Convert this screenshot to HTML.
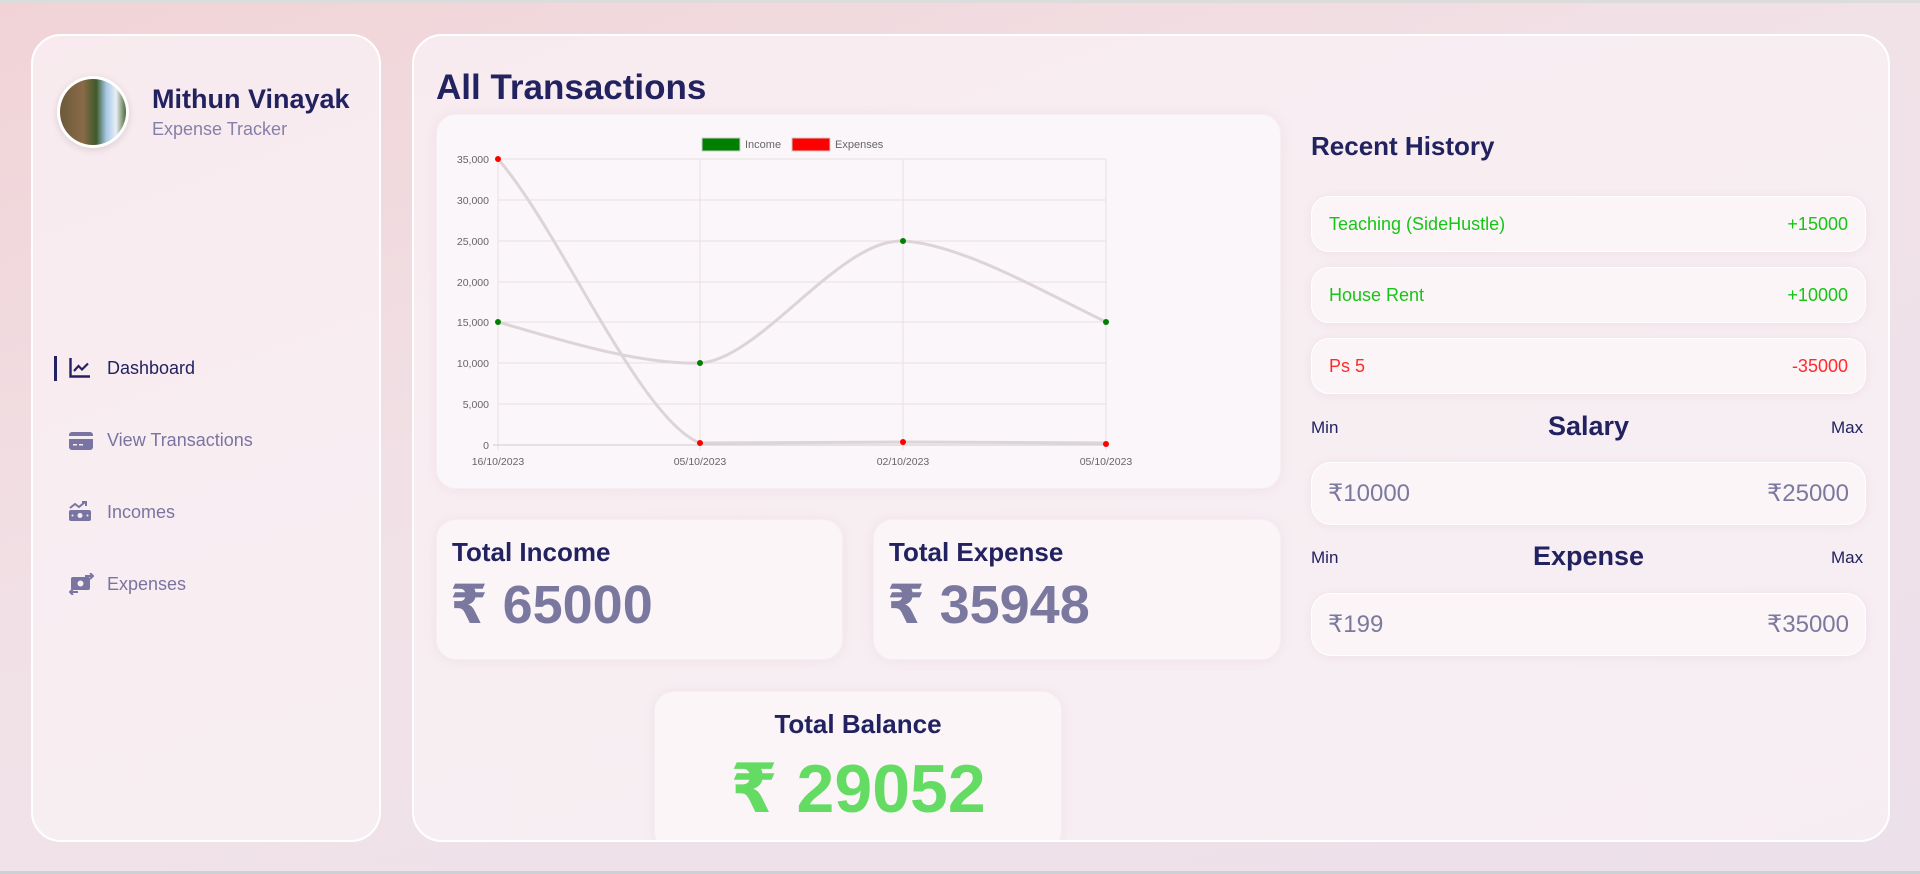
<!DOCTYPE html>
<html><head><meta charset="utf-8"><style>
*{margin:0;padding:0;box-sizing:border-box}
body{width:1920px;height:874px;overflow:hidden;font-family:"Liberation Sans","DejaVu Sans",sans-serif;background:linear-gradient(160deg,#f1d3d6 0%,#f1e2e8 45%,#ece0ea 100%);position:relative}
.topbar{position:absolute;left:0;top:0;width:1920px;height:3px;background:#dcdcdc}
.botbar{position:absolute;left:0;top:871px;width:1920px;height:3px;background:#c9d3d6}
.panel{position:absolute;background:rgba(250,242,245,0.75);border:2px solid #fff;border-radius:30px}
.card{position:absolute;background:#fbf5f8;border:1px solid #f7eef2;border-radius:20px;box-shadow:0 1px 12px rgba(200,170,185,0.18)}
.abs{position:absolute;white-space:nowrap}
.navy{color:#222260}
.nav{position:absolute;left:107px;font-size:18px;color:#7a74a2}
.hist{position:absolute;left:1311px;width:555px;height:56px;border-radius:18px;background:#fbf5f8;border:1px solid #fff;box-shadow:0 1px 10px rgba(200,170,185,0.2);font-size:18px;display:flex;justify-content:space-between;align-items:center;padding:0 17px}
.rng{position:absolute;left:1311px;width:555px;height:63px;border-radius:20px;background:#fbf5f8;border:1px solid #fff;box-shadow:0 1px 10px rgba(200,170,185,0.2);font-size:24px;color:#7b7a9e;display:flex;justify-content:space-between;align-items:center;padding:0 16px}
.mm{position:absolute;font-size:17px;color:#222260}
</style></head><body>
<div class="topbar"></div>
<div class="panel" style="left:31px;top:34px;width:350px;height:808px"></div>
<div class="panel" style="left:412px;top:34px;width:1478px;height:808px;overflow:hidden">
  <div style="position:absolute;left:240px;top:655px;width:408px;height:160px;background:#fbf5f8;border:1px solid #f7eef2;border-radius:20px;box-shadow:0 1px 12px rgba(200,170,185,0.18)"></div>
</div>

<!-- avatar -->
<div class="abs" style="left:57px;top:76px;width:72px;height:72px;border-radius:50%;background:#fff;box-shadow:0 2px 8px rgba(0,0,0,0.12)"></div>
<div class="abs" style="left:60px;top:79px;width:66px;height:66px;border-radius:50%;overflow:hidden;background:linear-gradient(90deg,#6b5a3a 0%,#8a6a48 35%,#3d5a2a 55%,#a6c8e6 70%,#e8eef5 85%,#4d6a34 100%)"></div>
<div class="abs navy" style="left:152px;top:84px;font-size:27px;font-weight:bold">Mithun Vinayak</div>
<div class="abs" style="left:152px;top:119px;font-size:18px;color:#8580aa">Expense Tracker</div>

<!-- nav -->
<div class="abs" style="left:54px;top:356px;width:3px;height:25px;background:#222260"></div>
<svg class="abs" style="left:69px;top:358px" width="22" height="20" viewBox="0 0 22 20"><path d="M1.5 0v18.5H21" stroke="#222260" stroke-width="2.4" fill="none"/><path d="M5 13l4.5-5 3.5 3.5 6-6" stroke="#222260" stroke-width="2.2" fill="none"/></svg>
<div class="nav" style="top:358px;color:#222260">Dashboard</div>
<svg class="abs" style="left:69px;top:432px" width="24" height="18" viewBox="0 0 24 18"><rect x="0" y="0" width="24" height="18" rx="3" fill="#7a74a2"/><rect x="0" y="4" width="24" height="3" fill="#f6eef2"/><rect x="4" y="12" width="4" height="1.5" fill="#f6eef2"/><rect x="10" y="12" width="4" height="1.5" fill="#f6eef2"/></svg>
<div class="nav" style="top:430px">View Transactions</div>
<svg class="abs" style="left:69px;top:501px" width="22" height="20" viewBox="0 0 22 20"><path d="M1 7l5-4 4 3 6-5M13 1h4v4" stroke="#7a74a2" stroke-width="2" fill="none"/><rect x="0" y="9" width="22" height="11" rx="2" fill="#7a74a2"/><circle cx="11" cy="14.5" r="2.5" fill="#f6eef2"/><circle cx="3.5" cy="14.5" r="1" fill="#f6eef2"/><circle cx="18.5" cy="14.5" r="1" fill="#f6eef2"/></svg>
<div class="nav" style="top:502px">Incomes</div>
<svg class="abs" style="left:69px;top:573px" width="25" height="22" viewBox="0 0 25 22"><rect x="2" y="4" width="19" height="13" rx="2" fill="#7a74a2"/><circle cx="11.5" cy="10.5" r="3" fill="#f6eef2"/><path d="M16 3h8M21 0l3 3-3 3M9 19H1M4 16l-3 3 3 3" stroke="#7a74a2" stroke-width="2" fill="none"/></svg>
<div class="nav" style="top:574px">Expenses</div>

<!-- title -->
<div class="abs navy" style="left:436px;top:68px;font-size:35px;font-weight:bold">All Transactions</div>

<!-- chart card -->
<div class="card" style="left:436px;top:114px;width:845px;height:375px;background:#fbf6f9"></div>
<svg class="abs" style="left:0;top:0" width="1920" height="874" viewBox="0 0 1920 874" font-family="Liberation Sans,sans-serif">
<rect x="702" y="138" width="38" height="13" fill="#008000" stroke="#ccc"/>
<text x="745" y="148" font-size="11" fill="#666">Income</text>
<rect x="792" y="138" width="38" height="13" fill="#ff0000" stroke="#ccc"/>
<text x="835" y="148" font-size="11" fill="#666">Expenses</text>
<g stroke="#e8e0e3" stroke-width="1">
<line x1="498" y1="159" x2="1106" y2="159"/><line x1="498" y1="200" x2="1106" y2="200"/><line x1="498" y1="241" x2="1106" y2="241"/><line x1="498" y1="282" x2="1106" y2="282"/><line x1="498" y1="322" x2="1106" y2="322"/><line x1="498" y1="363" x2="1106" y2="363"/><line x1="498" y1="404" x2="1106" y2="404"/>
<line x1="498" y1="159" x2="498" y2="450"/><line x1="700" y1="159" x2="700" y2="450"/><line x1="903" y1="159" x2="903" y2="450"/><line x1="1106" y1="159" x2="1106" y2="450"/>
</g>
<line x1="493" y1="445" x2="1106" y2="445" stroke="#ccc"/>
<g font-size="10.5" fill="#666" text-anchor="end">
<text x="489" y="163">35,000</text><text x="489" y="204">30,000</text><text x="489" y="245">25,000</text><text x="489" y="286">20,000</text><text x="489" y="326">15,000</text><text x="489" y="367">10,000</text><text x="489" y="408">5,000</text><text x="489" y="449">0</text>
</g>
<g font-size="10.5" fill="#666" text-anchor="middle">
<text x="498" y="465">16/10/2023</text><text x="700" y="465">05/10/2023</text><text x="903" y="465">02/10/2023</text><text x="1106" y="465">05/10/2023</text>
</g>
<path d="M498 322 C560 340,640 365,700 363 C760 360,840 238,903 241 C960 244,1040 290,1106 322" stroke="#dcd4d7" stroke-width="3" fill="none"/>
<path d="M498 159 C560 230,640 420,700 443 L903 442 L1106 443" stroke="#dcd4d7" stroke-width="3" fill="none"/>
<g fill="#008000"><circle cx="498" cy="322" r="3"/><circle cx="700" cy="363" r="3"/><circle cx="903" cy="241" r="3"/><circle cx="1106" cy="322" r="3"/></g>
<g fill="#ff0000"><circle cx="498" cy="159" r="3"/><circle cx="700" cy="443" r="3"/><circle cx="903" cy="442" r="3"/><circle cx="1106" cy="444" r="3"/></g>
</svg>

<!-- totals -->
<div class="card" style="left:436px;top:519px;width:407px;height:141px"></div>
<div class="abs navy" style="left:452px;top:537px;font-size:26px;font-weight:bold">Total Income</div>
<div class="abs" style="left:450px;top:573px;font-size:54px;font-weight:bold;color:#7a789e">₹ 65000</div>
<div class="card" style="left:873px;top:519px;width:408px;height:141px"></div>
<div class="abs navy" style="left:889px;top:537px;font-size:26px;font-weight:bold">Total Expense</div>
<div class="abs" style="left:887px;top:573px;font-size:54px;font-weight:bold;color:#7a789e">₹ 35948</div>
<div class="abs navy" style="left:654px;width:408px;text-align:center;top:709px;font-size:26px;font-weight:bold">Total Balance</div>
<div class="abs" style="left:654px;width:408px;text-align:center;top:750px;font-size:68px;font-weight:bold;color:#64dc64">₹ 29052</div>

<!-- recent history -->
<div class="abs navy" style="left:1311px;top:131px;font-size:26px;font-weight:bold">Recent History</div>
<div class="hist" style="top:196px;color:#16c516"><span>Teaching (SideHustle)</span><span>+15000</span></div>
<div class="hist" style="top:267px;color:#16c516"><span>House Rent</span><span>+10000</span></div>
<div class="hist" style="top:338px;color:#ff2a2a"><span>Ps 5</span><span>-35000</span></div>
<div class="mm" style="left:1311px;top:418px">Min</div>
<div class="abs navy" style="left:1311px;width:555px;text-align:center;top:411px;font-size:27px;font-weight:bold">Salary</div>
<div class="mm" style="left:1831px;top:418px">Max</div>
<div class="rng" style="top:462px"><span>₹10000</span><span>₹25000</span></div>
<div class="mm" style="left:1311px;top:548px">Min</div>
<div class="abs navy" style="left:1311px;width:555px;text-align:center;top:541px;font-size:27px;font-weight:bold">Expense</div>
<div class="mm" style="left:1831px;top:548px">Max</div>
<div class="rng" style="top:593px"><span>₹199</span><span>₹35000</span></div>
<div class="botbar"></div>
</body></html>
